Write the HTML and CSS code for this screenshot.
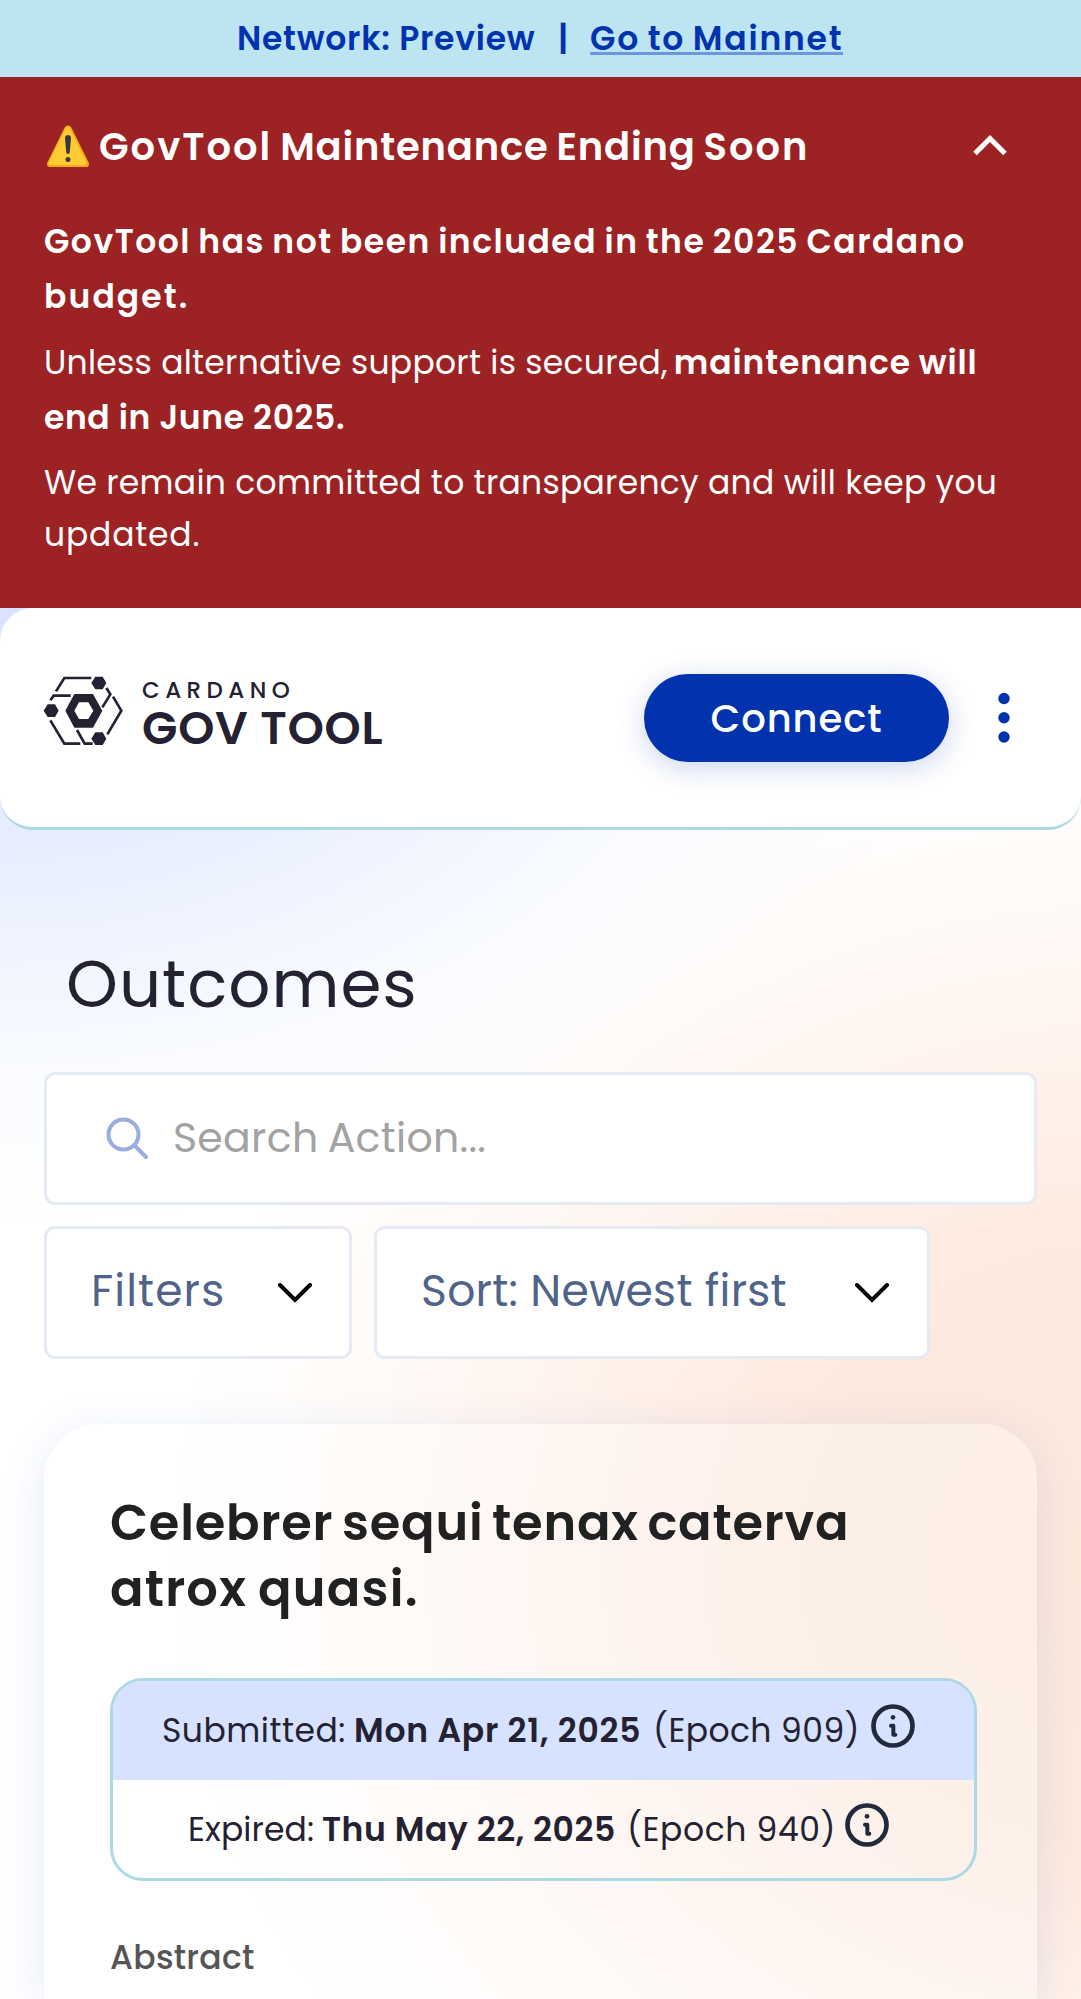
FILE: index.html
```html
<!DOCTYPE html>
<html lang="en">
<head>
<meta charset="utf-8">
<title>GovTool Outcomes</title>
<link rel="stylesheet" href="styles.css">
</head>
<body>
<div class="network"><span class="net-name">Network: Preview</span><span class="net-sep">|</span><a class="net-link">Go to Mainnet</a></div>
<section class="alert">
  <div class="alert-head">
    <svg class="warn" viewBox="0 0 44 44"><path d="M22 1.5c1.6 0 2.8 1 3.6 2.5l17 34.500c1 2.600 0 4.500-2.600 4.500H4c-2.600 0-3.600-1.900-2.600-4.500L18.400 4c.8-1.500 2-2.500 3.600-2.500z" fill="#f5a91c"/><path d="M21.500 3c1.200 0 2 .8 2.600 2l16 33c.8 2 0 3-1.800 3H4.800c-1.800 0-2.600-1-1.800-3l16-33c.6-1.200 1.300-2 2.500-2z" fill="#ffca32"/><path d="M19 14c0-4 6-4 6 0l-1.200 14c-.2 2.600-3.400 2.600-3.600 0z" fill="#35393d"/><circle cx="22" cy="35.500" r="2.500" fill="#35393d"/></svg>
    <h2 class="alert-title"><span class="wide">GovTool</span> Maintenance Ending <span class="wide">Soon</span></h2>
    <svg class="collapse" viewBox="0 0 34 22"><path d="M2 19.500L17 4.500L32 19.500" fill="none" stroke="#fff" stroke-width="5"/></svg>
  </div>
  <p class="p1"><b class="t1">GovTool has not been included in the 2025 Cardano</b><br><b class="t2">budget.</b></p>
  <p class="p2"><span class="t3">Unless alternative support is secured,</span> <b class="t4">maintenance will</b><br><b class="t5">end in June 2025.</b></p>
  <p class="p3"><span class="t3">We remain committed to transparency and will keep you</span><br><span class="t6">updated.</span></p>
</section>
<header class="header">
  <div class="logo">
    <svg class="mark" viewBox="0 0 270 240"><g fill="#242232"><path fill-rule="evenodd" d="M76 122L103 72H159L187 122L159 173H103ZM103 122L117 147H145L160 122L145 97H117Z"/><path d="M11 122L23 103H45L56 122L45 141H23ZM154 39L166 20H188L199 39L188 58H166ZM154 206L166 187H188L199 206L188 225H166Z"/></g><path d="M48 64L73 24H154M31 91L41 77H92M199 54L211 73L187 112M219 80L244 122L202 193M31 151L73 221H121M111 180L134 221H158" fill="none" stroke="#242232" stroke-width="8"/></svg>
    <div class="logo-text"><span class="logo-top">CARDANO</span><span class="logo-main">GOV TOOL</span></div>
  </div>
  <div class="actions">
    <button class="connect">Connect</button>
    <svg class="dots" viewBox="0 0 12 52"><g fill="#0033ad"><circle cx="6" cy="6.500" r="5.700"/><circle cx="6" cy="25.700" r="5.700"/><circle cx="6" cy="45" r="5.700"/></g></svg>
  </div>
</header>
<main class="main">
  <h1 class="page-title">Outcomes</h1>
  <div class="search">
    <svg class="lens" viewBox="0 0 43 43"><circle cx="17.500" cy="17.500" r="15" fill="none" stroke="#99addf" stroke-width="4"/><path d="M28 28L40 40" stroke="#99addf" stroke-width="4" stroke-linecap="round"/></svg>
    <span class="placeholder">Search Action...</span>
  </div>
  <div class="controls">
    <div class="select filters"><span class="filters-label">Filters</span><svg class="chev" viewBox="0 0 34 20"><path d="M2 2L17 17L32 2" fill="none" stroke="#000" stroke-width="4" stroke-linecap="round"/></svg></div>
    <div class="select sort"><span class="sort-label">Sort: Newest first</span><svg class="chev" viewBox="0 0 34 20"><path d="M2 2L17 17L32 2" fill="none" stroke="#000" stroke-width="4" stroke-linecap="round"/></svg></div>
  </div>
  <article class="card">
    <h3 class="card-title"><span class="c1">Celebrer sequi tenax caterva</span><br><span class="c2">atrox quasi.</span></h3>
    <div class="dates">
      <div class="date submitted"><span class="s1">Submitted:</span><b class="s2">Mon Apr 21, 2025</b><span class="s3">(Epoch 909)</span><svg class="info" viewBox="-66 -66 132 132"><circle r="58.500" fill="none" stroke="#212a3d" stroke-width="14"/><circle cy="-26" r="7" fill="#212a3d"/><path d="M-6 -1H1V26H7" fill="none" stroke="#212a3d" stroke-width="12" stroke-linecap="round" stroke-linejoin="round"/></svg></div>
      <div class="date expired"><span class="e1">Expired:</span><b class="e2">Thu May 22, 2025</b><span class="e3">(Epoch 940)</span><svg class="info" viewBox="-66 -66 132 132"><circle r="58.500" fill="none" stroke="#212a3d" stroke-width="14"/><circle cy="-26" r="7" fill="#212a3d"/><path d="M-6 -1H1V26H7" fill="none" stroke="#212a3d" stroke-width="12" stroke-linecap="round" stroke-linejoin="round"/></svg></div>
    </div>
    <div class="abstract">Abstract</div>
  </article>
</main>
</body>
</html>
```
FILE: styles.css
```css
*{box-sizing:border-box;margin:0;padding:0}
body{height:1999px;overflow:hidden;font-family:Poppins,Inter,sans-serif;font-size:33px;color:#242232;
background:
radial-gradient(ellipse 950px 620px at 0 600px,rgba(214,225,255,.95),rgba(226,234,255,.8) 40%,rgba(243,247,255,.5) 75%,rgba(255,255,255,0)),
radial-gradient(ellipse 960px 820px at 1130px 1560px,#fde8dc 0,#fde9de 35%,#fff1ea 58%,#fffaf7 80%,rgba(255,255,255,0)),
#fff}
b,h1,h2,h3{font-weight:600}
svg{display:block;flex:none}
span,b,h1,h2,a{white-space:nowrap}
.network{height:77px;background:#bce4f1;color:#0033ad;font-weight:600;line-height:77px;display:flex;padding-left:237px}
.net-name{width:321px;letter-spacing:.75px}
.net-sep{width:32px}
.net-link{letter-spacing:1.8px;word-spacing:-2px;height:55px;border-bottom:3px solid #6b98da}
.alert{height:531px;background:#9c2224;color:#fff;padding:34px 44px 0}
.alert-head{display:flex;align-items:center;height:70px;margin-bottom:34px}
.warn{width:44px;height:44px;margin-left:2px}
.alert-title{font-size:38.5px;letter-spacing:.8px;word-spacing:-2px;margin-left:9px;flex:1}
.wide{letter-spacing:2px}
.collapse{width:34px;height:22px;margin:-2px 30px 0 0}
.p1{line-height:54.5px;margin-bottom:11px}
.p2{line-height:55.300px;margin-bottom:11px}
.p3{line-height:52.500px}
.t1{letter-spacing:1.5px;word-spacing:-2px}
.t2{letter-spacing:2.1px}
.t3{letter-spacing:.27px}
.t4{letter-spacing:.9px;word-spacing:-1px;margin-left:-3px}
.t5{letter-spacing:.6px}
.t6{letter-spacing:.8px}
.header{height:222px;background:#fff;border-radius:33px;border-bottom:3px solid #add8e6;display:flex;justify-content:space-between;padding:62px 71px 0 40px}
.logo{display:flex}
.mark{width:90px;height:80px}
.logo-text{display:flex;flex-direction:column;margin-left:12px;padding-top:3px}
.logo-top{font-size:23px;font-weight:500;letter-spacing:5.4px;line-height:35px}
.logo-main{font-size:46px;font-weight:600;letter-spacing:.8px;line-height:40px}
.actions{display:flex;align-items:flex-start;gap:49px;padding-top:4px}
.connect{width:305px;height:88px;border:0;border-radius:44px;background:#0033ad;color:#fff;font:500 38.500px Poppins,Inter,sans-serif;letter-spacing:.9px;box-shadow:0 6px 28px rgba(0,51,173,.2)}
.dots{width:12px;height:52px;margin-top:18px}
.main{padding:0 44px}
.page-title{font-size:66px;font-weight:400;line-height:90px;letter-spacing:1px;margin:109px 0 43px 22px}
.search{height:133px;background:#fff;border:3px solid #e6eaf3;border-radius:11px;display:flex;align-items:center;padding-left:59px}
.lens{width:43px;height:43px}
.placeholder{font-size:41px;color:#a2a2a2;margin:-2px 0 0 24px;letter-spacing:.3px;word-spacing:-2px}
.controls{display:flex;gap:22px;margin-top:21px}
.select{height:133px;background:#fff;border:3px solid #e6eaf3;border-radius:11px;display:flex;align-items:center;justify-content:space-between;color:#506389;font-size:44px}
.select span{margin-top:-4px}
.filters{width:308px;padding:0 37px 0 44px}
.sort{width:556px;padding:0 38px 0 44px}
.filters-label{letter-spacing:1.1px}
.sort-label{letter-spacing:.3px}
.chev{width:34px;height:20px;margin-top:1px}
.card{height:575px;margin-top:65px;border-radius:55px 55px 0 0;background:rgba(255,255,255,.32);box-shadow:0 8px 44px rgba(47,98,220,.13);padding:66px 60px 0 66px}
.card-title{font-size:49.5px;line-height:66px;color:#212121}
.c1{letter-spacing:.8px;word-spacing:-4px}
.c2{letter-spacing:1.2px;word-spacing:-2px}
.dates{height:203px;margin-top:56px;border:3px solid #add8e6;border-radius:33px;overflow:hidden}
.date{height:99px;display:flex;align-items:center;line-height:98px}
.submitted{background:#d6e2ff;padding-left:49px}
.expired{padding-left:75px}
.s1{width:192px;letter-spacing:.5px}
.s2{width:299px;letter-spacing:.75px}
.s3{width:218px;letter-spacing:.4px}
.e1{width:134px;letter-spacing:.1px}
.e2{width:305px;letter-spacing:.55px}
.e3{width:218px;letter-spacing:.6px}
.info{width:44px;height:44px;margin-top:-9px}
.abstract{font-weight:500;color:#555;margin-top:54px;line-height:46px;letter-spacing:.27px}
```
